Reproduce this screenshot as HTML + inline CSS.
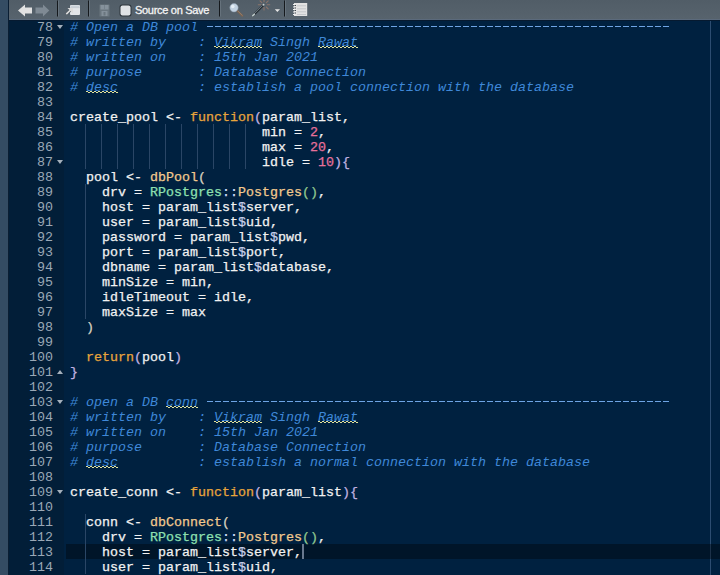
<!DOCTYPE html>
<html><head><meta charset="utf-8"><style>
html,body{margin:0;padding:0;}
body{width:720px;height:575px;overflow:hidden;position:relative;background:#002140;font-family:"Liberation Mono",monospace;}
#strip{position:absolute;left:0;top:0;width:8px;height:575px;background:#344c63;}
#sline{position:absolute;left:8px;top:0;width:1px;height:575px;background:#0a1e33;}
#gutter{position:absolute;left:9px;top:20px;width:55px;height:555px;background:#021e38;}
#active{position:absolute;left:66px;top:544px;width:654px;height:15px;background:rgba(0,0,0,0.35);}
#margin{position:absolute;left:710px;top:21px;width:1px;height:554px;background:#2c4c70;}
.ln{position:absolute;left:9px;width:44px;text-align:right;height:15px;line-height:15px;padding-top:1px;font-size:13.33px;color:#9aa8b6;}
.fd,.fu{position:absolute;left:57px;width:0;height:0;border-left:3px solid transparent;border-right:3px solid transparent;}
.fd{border-top:4px solid #a4b0bc;}
.fu{border-bottom:4px solid #a4b0bc;}
.cl{position:absolute;left:70px;white-space:pre;height:15px;line-height:15px;padding-top:1px;font-size:13.33px;color:#f2f2f2;-webkit-text-stroke:0.25px currentColor;}
.c{color:#3f88d8;font-style:italic;-webkit-text-stroke:0;}
.dash{position:absolute;left:206px;width:464px;height:1px;background:repeating-linear-gradient(90deg,transparent 0 1px,#6ea4e4 1px 7px,transparent 7px 8px);}
.sq1,.sq2{position:absolute;height:1px;}
.sq1{background:repeating-linear-gradient(90deg,#e2e29c 0 2px,transparent 2px 4px);}
.sq2{background:repeating-linear-gradient(90deg,transparent 0 2px,#e2e29c 2px 4px);}
.k{color:#e8a53c;}
.f{color:#f2c98e;}
.s{color:#8ee0b0;}
.o{color:#c8dcf0;}
.n{color:#e8709a;}
.p0{color:#c0b2e2;}
.dl{color:#c8d0ec;}
.p1{color:#d8d2c0;}
.p2{color:#90c890;}
#cursor{position:absolute;left:302px;top:544px;width:2px;height:15px;background:#68788e;z-index:5;}
.ig{position:absolute;width:1px;background:#2a4666;}
#tb{position:absolute;left:9px;top:0;width:711px;height:19px;background:linear-gradient(#515d67,#57636d);}
#tbb{position:absolute;left:9px;top:19px;width:711px;height:1px;background:#5b6a7c;}
#tbd{position:absolute;left:9px;top:20px;width:711px;height:1px;background:#061a30;}
.sep{position:absolute;top:2px;width:1px;height:14px;background:#1c2228;}
#tbtext{position:absolute;left:135px;top:1px;font-family:"Liberation Sans",sans-serif;font-size:12px;line-height:17px;color:#f4f4f4;}
#chk{position:absolute;left:120px;top:4px;width:11px;height:11px;border-radius:2px;background:#dcdcdc;}
</style></head><body>
<div id="strip"></div><div id="sline"></div>
<div id="gutter"></div>
<div id="margin"></div>
<div id="active"></div>
<div id="cursor"></div>
<div class="dash" style="top:26px"></div><div class="dash" style="top:401px"></div><div class="sq1" style="left:214px;top:46px;width:48px"></div><div class="sq2" style="left:214px;top:47px;width:48px"></div><div class="sq1" style="left:318px;top:46px;width:40px"></div><div class="sq2" style="left:318px;top:47px;width:40px"></div><div class="sq1" style="left:86px;top:91px;width:32px"></div><div class="sq2" style="left:86px;top:92px;width:32px"></div><div class="sq1" style="left:166px;top:406px;width:32px"></div><div class="sq2" style="left:166px;top:407px;width:32px"></div><div class="sq1" style="left:214px;top:421px;width:48px"></div><div class="sq2" style="left:214px;top:422px;width:48px"></div><div class="sq1" style="left:318px;top:421px;width:40px"></div><div class="sq2" style="left:318px;top:422px;width:40px"></div><div class="sq1" style="left:86px;top:466px;width:32px"></div><div class="sq2" style="left:86px;top:467px;width:32px"></div><div class="ig" style="left:85px;top:124px;height:45px"></div><div class="ig" style="left:101px;top:124px;height:45px"></div><div class="ig" style="left:117px;top:124px;height:45px"></div><div class="ig" style="left:133px;top:124px;height:45px"></div><div class="ig" style="left:149px;top:124px;height:45px"></div><div class="ig" style="left:165px;top:124px;height:45px"></div><div class="ig" style="left:181px;top:124px;height:45px"></div><div class="ig" style="left:197px;top:124px;height:45px"></div><div class="ig" style="left:213px;top:124px;height:45px"></div><div class="ig" style="left:229px;top:124px;height:45px"></div><div class="ig" style="left:245px;top:124px;height:45px"></div><div class="ig" style="left:85px;top:184px;height:135px"></div><div class="ig" style="left:85px;top:514px;height:60px"></div>
<div class="ln" style="top:19px">78</div><div class="fd" style="top:25px"></div><div class="ln" style="top:34px">79</div><div class="ln" style="top:49px">80</div><div class="ln" style="top:64px">81</div><div class="ln" style="top:79px">82</div><div class="ln" style="top:94px">83</div><div class="ln" style="top:109px">84</div><div class="ln" style="top:124px">85</div><div class="ln" style="top:139px">86</div><div class="ln" style="top:154px">87</div><div class="fd" style="top:160px"></div><div class="ln" style="top:169px">88</div><div class="ln" style="top:184px">89</div><div class="ln" style="top:199px">90</div><div class="ln" style="top:214px">91</div><div class="ln" style="top:229px">92</div><div class="ln" style="top:244px">93</div><div class="ln" style="top:259px">94</div><div class="ln" style="top:274px">95</div><div class="ln" style="top:289px">96</div><div class="ln" style="top:304px">97</div><div class="ln" style="top:319px">98</div><div class="ln" style="top:334px">99</div><div class="ln" style="top:349px">100</div><div class="ln" style="top:364px">101</div><div class="fu" style="top:370px"></div><div class="ln" style="top:379px">102</div><div class="ln" style="top:394px">103</div><div class="fd" style="top:400px"></div><div class="ln" style="top:409px">104</div><div class="ln" style="top:424px">105</div><div class="ln" style="top:439px">106</div><div class="ln" style="top:454px">107</div><div class="ln" style="top:469px">108</div><div class="ln" style="top:484px">109</div><div class="fd" style="top:490px"></div><div class="ln" style="top:499px">110</div><div class="ln" style="top:514px">111</div><div class="ln" style="top:529px">112</div><div class="ln" style="top:544px">113</div><div class="ln" style="top:559px">114</div>
<div class="cl" style="top:19px"><span class="c"># Open a DB pool </span></div><div class="cl" style="top:34px"><span class="c"># written by    : </span><span class="c">Vikram</span><span class="c"> Singh </span><span class="c">Rawat</span></div><div class="cl" style="top:49px"><span class="c"># written on    : 15th Jan 2021</span></div><div class="cl" style="top:64px"><span class="c"># purpose       : Database Connection</span></div><div class="cl" style="top:79px"><span class="c"># </span><span class="c">desc</span><span class="c">          : establish a pool connection with the database</span></div><div class="cl" style="top:94px"></div><div class="cl" style="top:109px">create_pool &lt;- <span class="k">function</span><span class="p0">(</span>param_list,</div><div class="cl" style="top:124px">                        min = <span class="n">2</span>,</div><div class="cl" style="top:139px">                        max = <span class="n">20</span>,</div><div class="cl" style="top:154px">                        idle = <span class="n">10</span><span class="p0">)</span><span class="p0">{</span></div><div class="cl" style="top:169px">  pool &lt;- <span class="f">dbPool</span><span class="p1">(</span></div><div class="cl" style="top:184px">    drv = <span class="s">RPostgres</span><span class="o">::</span><span class="f">Postgres</span><span class="p2">()</span>,</div><div class="cl" style="top:199px">    host = param_list<span class="dl">$</span>server,</div><div class="cl" style="top:214px">    user = param_list<span class="dl">$</span>uid,</div><div class="cl" style="top:229px">    password = param_list<span class="dl">$</span>pwd,</div><div class="cl" style="top:244px">    port = param_list<span class="dl">$</span>port,</div><div class="cl" style="top:259px">    dbname = param_list<span class="dl">$</span>database,</div><div class="cl" style="top:274px">    minSize = min,</div><div class="cl" style="top:289px">    idleTimeout = idle,</div><div class="cl" style="top:304px">    maxSize = max</div><div class="cl" style="top:319px">  <span class="p1">)</span></div><div class="cl" style="top:334px"></div><div class="cl" style="top:349px">  <span class="k">return</span><span class="p0">(</span>pool<span class="p0">)</span></div><div class="cl" style="top:364px"><span class="p0">}</span></div><div class="cl" style="top:379px"></div><div class="cl" style="top:394px"><span class="c"># open a DB </span><span class="c">conn</span><span class="c"> </span></div><div class="cl" style="top:409px"><span class="c"># written by    : </span><span class="c">Vikram</span><span class="c"> Singh </span><span class="c">Rawat</span></div><div class="cl" style="top:424px"><span class="c"># written on    : 15th Jan 2021</span></div><div class="cl" style="top:439px"><span class="c"># purpose       : Database Connection</span></div><div class="cl" style="top:454px"><span class="c"># </span><span class="c">desc</span><span class="c">          : establish a normal connection with the database</span></div><div class="cl" style="top:469px"></div><div class="cl" style="top:484px">create_conn &lt;- <span class="k">function</span><span class="p0">(</span>param_list<span class="p0">)</span><span class="p0">{</span></div><div class="cl" style="top:499px"></div><div class="cl" style="top:514px">  conn &lt;- <span class="f">dbConnect</span><span class="p1">(</span></div><div class="cl" style="top:529px">    drv = <span class="s">RPostgres</span><span class="o">::</span><span class="f">Postgres</span><span class="p2">()</span>,</div><div class="cl" style="top:544px">    host = param_list<span class="dl">$</span>server,</div><div class="cl" style="top:559px">    user = param_list<span class="dl">$</span>uid,</div>
<div id="tb"></div><div id="tbb"></div><div id="tbd"></div>
<svg style="position:absolute;left:0;top:0" width="720" height="20">
 <polygon points="18,10.5 25,4.5 25,7.5 32,7.5 32,13.5 25,13.5 25,16.5" fill="#e2e2e2"/>
 <polygon points="49.3,10.5 43,4.5 43,7.5 35.5,7.5 35.5,13.5 43,13.5 43,16.5" fill="#7f8a94"/>
 <rect x="57" y="0.5" width="1" height="16" fill="#15191d"/><rect x="58" y="0.5" width="1" height="16" fill="#66727c"/>
 <rect x="70" y="5" width="10" height="10" rx="1" fill="#e2e5e8"/>
 <rect x="70.5" y="5.5" width="9" height="2" rx="0.8" fill="#c9d1d8"/>
 <rect x="70" y="7.5" width="10" height="0.6" fill="#b8c0c8"/>
 <path d="M66.3,14.2 L71,9.5" stroke="#4a545c" stroke-width="3"/><path d="M66.3,14.2 L71,9.5" stroke="#dcdcdc" stroke-width="1.7"/>
 <polygon points="67.5,8 73,8 73,13.5" fill="#dcdcdc"/>
 <rect x="88" y="0.5" width="1" height="16" fill="#15191d"/><rect x="89" y="0.5" width="1" height="16" fill="#66727c"/>
 <rect x="99.5" y="4.5" width="10" height="12" rx="0.5" fill="#6a767f"/>
 <rect x="100.5" y="5" width="8" height="4.5" fill="#86929c"/>
 <rect x="104" y="5" width="1" height="4.5" fill="#76828c"/>
 <rect x="101.5" y="11" width="6" height="5" fill="#84909a"/>
 <rect x="103.5" y="12" width="2" height="3.5" fill="#6a767f"/>
 <rect x="119.5" y="4.5" width="12" height="12" rx="2.5" fill="#2e363d"/>
 <rect x="120.5" y="5.5" width="10" height="10" rx="2" fill="#dfe2e5"/>
 <rect x="219" y="0.5" width="1" height="16" fill="#15191d"/><rect x="220" y="0.5" width="1" height="16" fill="#66727c"/>
 <path d="M237.5,11 L242.3,15.8" stroke="#7a6452" stroke-width="2" stroke-linecap="round"/><path d="M238,11 L242.5,15.5" stroke="#a08a78" stroke-width="0.6"/>
 <circle cx="234" cy="7.7" r="4.2" fill="#c2d2e2" stroke="#8c9cac" stroke-width="0.5"/>
 <circle cx="232.8" cy="6.5" r="1.8" fill="#e4eef6"/>
 <g stroke="#8c746a" stroke-width="1.1" stroke-linecap="round">
  <path d="M264,-0.5 L264,1.8"/><path d="M264,7.5 L264,10"/>
  <path d="M258.3,4.8 L260.8,4.8"/><path d="M267.2,4.8 L269.8,4.8"/>
  <path d="M260,0.8 L261.8,2.6"/><path d="M266.3,7 L268.2,8.8"/>
  <path d="M268.2,0.8 L266.3,2.6"/><path d="M261.8,7 L260.3,8.5"/>
 </g>
 <path d="M253,15.5 L263,5.5" stroke="#262e34" stroke-width="2.2" stroke-linecap="round"/>
 <path d="M253.3,14.6 L262.3,5.6" stroke="#8d9aa2" stroke-width="0.7"/>
 <path d="M252.8,15.7 L254.2,14.3" stroke="#b8c4c4" stroke-width="1.8" stroke-linecap="round"/><circle cx="263.5" cy="4.8" r="1" fill="#c8d0d0"/>
 <polygon points="274.8,9.2 280,9.2 277.4,11.9" fill="#e8e8e8"/>
 <rect x="284" y="0.5" width="1" height="16" fill="#15191d"/><rect x="285" y="0.5" width="1" height="16" fill="#66727c"/>
 <rect x="294" y="3" width="13.2" height="13" fill="#e2e2e2"/>
 <g fill="#b8bcc0"><rect x="297" y="5.5" width="9" height="0.7"/><rect x="297" y="8.5" width="9" height="0.7"/><rect x="297" y="11.5" width="9" height="0.7"/><rect x="297" y="14" width="9" height="0.7"/></g>
 <g fill="#f2f2f2"><rect x="293" y="4" width="2" height="1"/><rect x="293" y="6.5" width="2" height="1"/><rect x="293" y="9" width="2" height="1"/><rect x="293" y="11.5" width="2" height="1"/><rect x="293" y="14" width="2" height="1"/></g>
 <g fill="#3e464c"><rect x="294.5" y="5" width="1.5" height="1"/><rect x="294.5" y="7.5" width="1.5" height="1"/><rect x="294.5" y="10" width="1.5" height="1"/><rect x="294.5" y="12.5" width="1.5" height="1"/></g>
 <text x="135" y="13.6" font-family="Liberation Sans" font-size="11" letter-spacing="-0.3" fill="#f4f4f4" stroke="#f4f4f4" stroke-width="0.3">Source on Save</text>
</svg>
</body></html>
